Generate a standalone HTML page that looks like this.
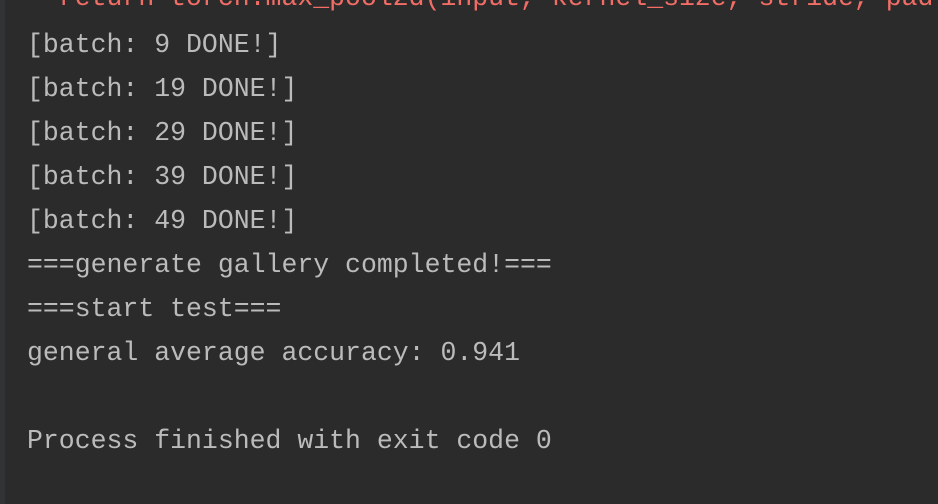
<!DOCTYPE html>
<html><head><style>
html,body{margin:0;padding:0;width:938px;height:504px;overflow:hidden;background:#2b2b2b}
.g{position:absolute;left:0;top:0;width:5px;height:504px;background:#313335}
.l{position:absolute;left:27px;font-family:"Liberation Mono",monospace;font-size:26.5px;color:#bbbbbb;white-space:pre;line-height:30px}
.r{color:#f26d66}
</style></head><body>
<div class="g"></div>
<div class="l r" style="top:-17px">  return torch.max_pool2d(input, kernel_size, stride, pad</div>
<div class="l" style="top:30px">[batch: 9 DONE!]</div>
<div class="l" style="top:74px">[batch: 19 DONE!]</div>
<div class="l" style="top:118px">[batch: 29 DONE!]</div>
<div class="l" style="top:162px">[batch: 39 DONE!]</div>
<div class="l" style="top:206px">[batch: 49 DONE!]</div>
<div class="l" style="top:250px">===generate gallery completed!===</div>
<div class="l" style="top:294px">===start test===</div>
<div class="l" style="top:338px">general average accuracy: 0.941</div>
<div class="l" style="top:426px">Process finished with exit code 0</div>
</body></html>
